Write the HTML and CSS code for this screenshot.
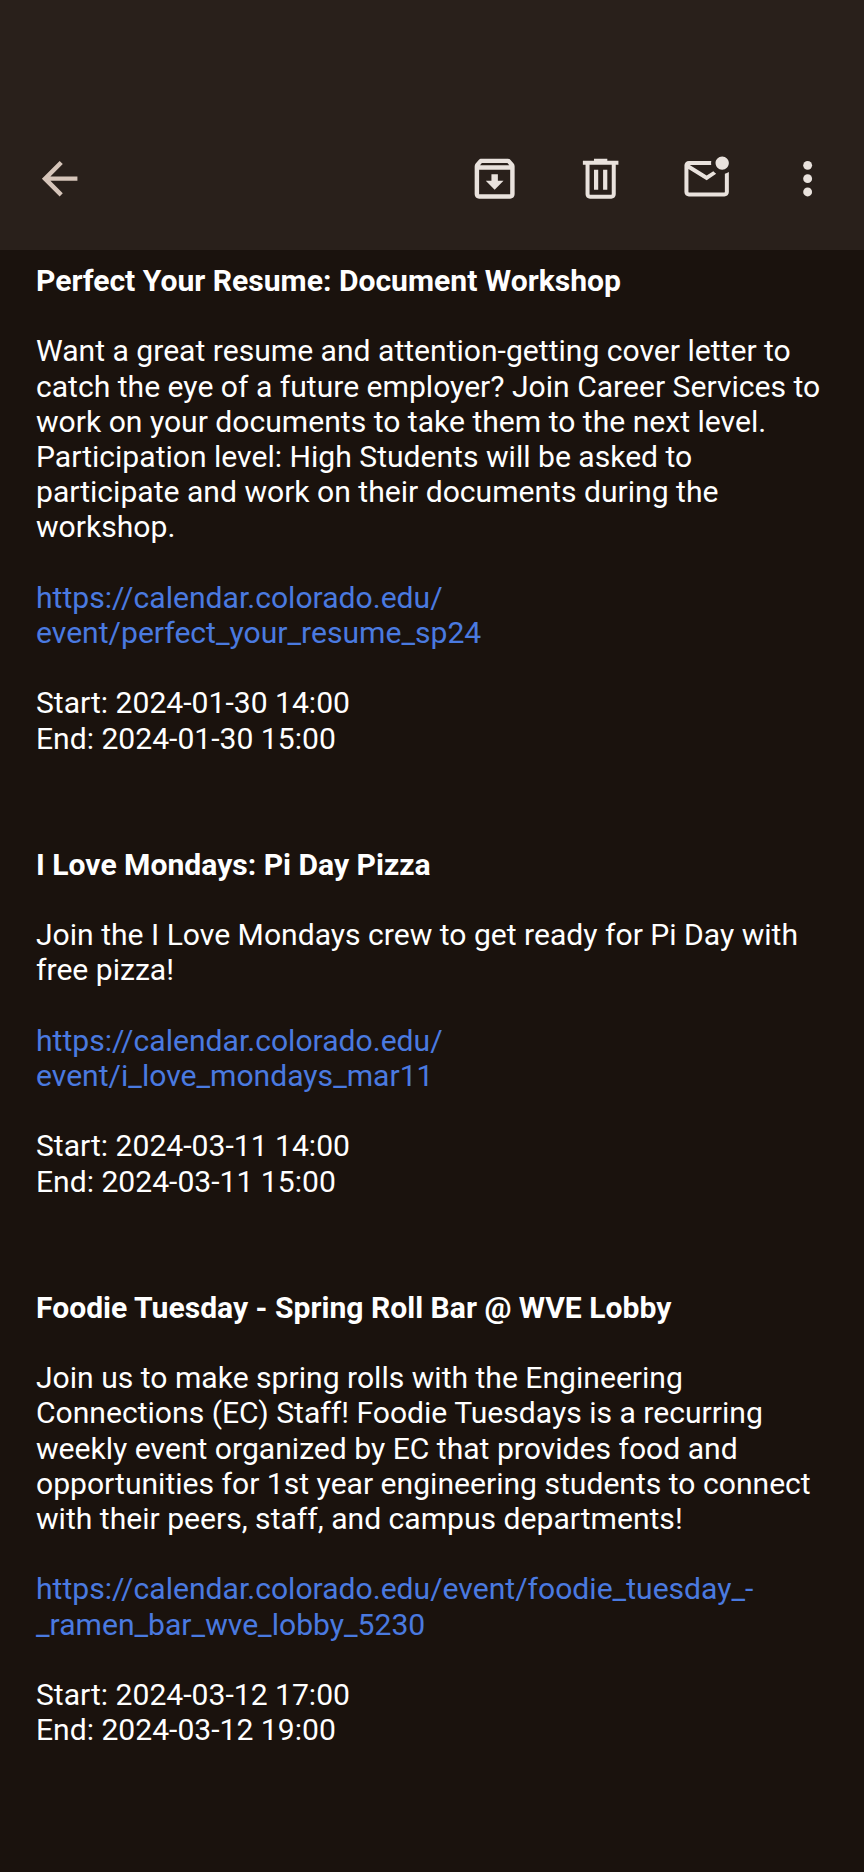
FILE: index.html
```html
<!DOCTYPE html>
<html lang="en">
<head>
  <meta charset="UTF-8">
  <title>Events</title>
  <link rel="stylesheet" href="styles.css">
</head>
<body>
  <header class="toolbar">
    <button class="icon-btn back" aria-label="Back">
      <svg viewBox="0 0 24 24"><path d="M20 11H7.83l5.59-5.59L12 4l-8 8 8 8 1.41-1.41L7.83 13H20v-2z"/></svg>
    </button>
    <div class="actions">
      <button class="icon-btn" aria-label="Archive">
        <svg viewBox="0 0 24 24"><path d="M20.54 5.23l-1.39-1.68C18.88 3.21 18.47 3 18 3H6c-.47 0-.88.21-1.16.55L3.46 5.23C3.17 5.57 3 6.02 3 6.5V19c0 1.1.9 2 2 2h14c1.1 0 2-.9 2-2V6.5c0-.48-.17-.93-.46-1.27zM6.24 5h11.52l.83 1H5.42l.82-1zM5 19V8h14v11H5zm8.45-9h-2.9v3H8l4 4 4-4h-2.55z"/></svg>
      </button>
      <button class="icon-btn" aria-label="Delete">
        <svg viewBox="0 0 24 24"><path d="M15 3.900V3H9v.9H4v1.800h1.200V19c0 1.100.9 2 2 2h9.600c1.100 0 2-.9 2-2V5.700H20V3.900h-5zM17 19c0 .1-.1.2-.2.2H7.200c-.1 0-.2-.1-.2-.2V5.700h10V19zM9 8h1.900v9H9V8zm4.100 0H15v9h-1.900V8z"/></svg>
      </button>
      <button class="icon-btn" aria-label="Mark unread">
        <svg viewBox="0 0 24 24"><path d="M22 9v9c0 1.100-.9 2-2 2H4c-1.100 0-2-.9-2-2V6c0-1.100.9-2 2-2h10.100c-.06.320-.1.660-.1 1 0 .270.020.540.060.800H4.400L12 10.600l3-1.900c.35.420.8.780 1.300 1.050L12 12.700 3.800 7.600V18c0 .1.100.2.200.2h16c.1 0 .2-.1.200-.2V9.800c.65-.15 1.250-.42 1.800-.8zM16 5c0 1.660 1.340 3 3 3s3-1.340 3-3-1.340-3-3-3-3 1.340-3 3z"/></svg>
      </button>
      <button class="icon-btn more" aria-label="More">
        <svg viewBox="0 0 24 24"><circle cx="12" cy="6" r="2"/><circle cx="12" cy="12" r="2"/><circle cx="12" cy="18" r="2"/></svg>
      </button>
    </div>
  </header>

  <main class="content">
    <section class="event">
      <h2>Perfect Your Resume: Document Workshop</h2>
      <p>Want a great resume and attention-getting cover letter to catch the eye of a future employer? Join Career Services to work on your documents to take them to the next level. Participation level: High Students will be asked to participate and work on their documents during the workshop.</p>
      <p><a href="#">https://calendar.colorado.edu/<br>event/perfect_your_resume_sp24</a></p>
      <p>Start: 2024-01-30 14:00<br>End: 2024-01-30 15:00</p>
    </section>

    <section class="event">
      <h2>I Love Mondays: Pi Day Pizza</h2>
      <p>Join the I Love Mondays crew to get ready for Pi Day with free pizza!</p>
      <p><a href="#">https://calendar.colorado.edu/<br>event/i_love_mondays_mar11</a></p>
      <p>Start: 2024-03-11 14:00<br>End: 2024-03-11 15:00</p>
    </section>

    <section class="event">
      <h2>Foodie Tuesday - Spring Roll Bar @ WVE Lobby</h2>
      <p>Join us to make spring rolls with the Engineering Connections (EC) Staff! Foodie Tuesdays is a recurring weekly event organized by EC that provides food and opportunities for 1st year engineering students to connect with their peers, staff, and campus departments!</p>
      <p><a href="#">https://calendar.colorado.edu/event/foodie_tuesday_-<br>_ramen_bar_wve_lobby_5230</a></p>
      <p>Start: 2024-03-12 17:00<br>End: 2024-03-12 19:00</p>
    </section>
  </main>
</body>
</html>
```

FILE: styles.css
```css
html, body {
  margin: 0;
  height: 100%;
  background: #1a120d;
}
body {
  font-family: Roboto, sans-serif;
  color: #fff;
  overflow: hidden;
}
.toolbar {
  height: 250px;
  box-sizing: border-box;
  padding: 152px 8px 0 34px;
  background: #29201b;
  display: flex;
  justify-content: space-between;
  align-items: flex-start;
}
.actions {
  display: flex;
}
.icon-btn {
  width: 52px;
  height: 54px;
  padding: 0;
  border: none;
  background: none;
  display: flex;
  align-items: center;
  justify-content: center;
}
.actions .icon-btn {
  width: 106px;
}
.actions .more {
  width: 96px;
}
.icon-btn svg {
  width: 53.3px;
  height: 53.3px;
  fill: #e9e2dd;
  flex: none;
}
.back svg {
  fill: #d6c5ba;
}
.content {
  padding: 13px 36px 0;
  font-size: 30.1px;
  line-height: 35.2px;
}
.event {
  margin-bottom: 91px;
}
.event h2 {
  margin: 0 0 35.2px;
  font-size: inherit;
  line-height: inherit;
  font-weight: 700;
}
.event p {
  margin: 0 0 35.2px;
}
.event a {
  color: #4a7ae0;
  text-decoration: none;
}
```
